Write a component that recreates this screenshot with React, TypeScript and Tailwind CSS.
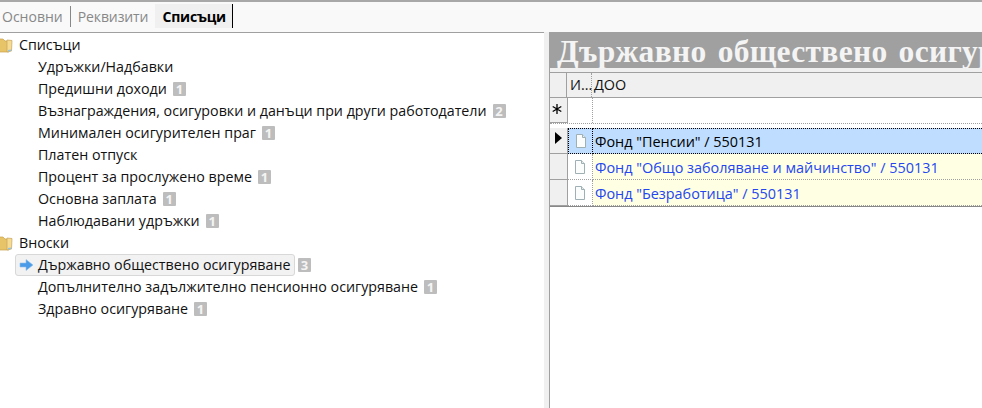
const FONT = "font-['Open_Sans','Noto_Sans',sans-serif]";

function Folder() {
  return (
    <svg width="13" height="16" viewBox="0 0 13 16" className="shrink-0">
      <path d="M-4 2 H3 L5 4 H9 V15 H-4 Z" fill="#e8c468" stroke="#c9a24a" strokeWidth="0.7" />
      <path d="M7 3 L12 3.5 L11.5 14 L7 15 Z" fill="#f6dc92" stroke="#c6a45a" strokeWidth="0.7" />
      <path d="M8 13 L11 12.5 L11 14 L8 14.5 Z" fill="#8fc4e8" />
    </svg>
  );
}

function Badge({ n, tight }: { n: number; tight?: boolean }) {
  return (
    <span className={`${tight ? "ml-[3px]" : "ml-[6px]"} flex h-[14px] w-[13px] items-center justify-center rounded-[1px] bg-[#bdbdbd] text-[13px] font-bold leading-none text-[#f4f4f4]`}>
      {n}
    </span>
  );
}

function Item({ label, badge }: { label: string; badge?: number }) {
  return (
    <div className="flex h-[22px] items-center pl-[38px]">
      <span className="whitespace-nowrap">{label}</span>
      {badge !== undefined && <Badge n={badge} />}
    </div>
  );
}

function Group({ label }: { label: string }) {
  return (
    <div className="flex h-[22px] items-center">
      <Folder />
      <span className="ml-[6px]">{label}</span>
    </div>
  );
}

function DocIcon() {
  return (
    <svg width="12" height="14" viewBox="0 0 12 14">
      <path d="M1.5 .5 H7.5 L10.5 3.5 V13.5 H1.5 Z" fill="#fbfcfc" stroke="#9fb0b4" />
      <path d="M7.5 .5 V3.5 H10.5" fill="#e4ecee" stroke="#9fb0b4" />
    </svg>
  );
}

function Row({ text, selected }: { text: string; selected?: boolean }) {
  return (
    <div className="flex h-[26px]">
      <div className="flex w-[18px] shrink-0 items-center justify-center border-r border-b border-[#a0a0a0] bg-[#f0f0f0]">
        {selected && <div className="mb-[5px] h-0 w-0 border-y-[6px] border-l-[7px] border-y-transparent border-l-black" />}
      </div>
      <div className={`flex w-[25px] shrink-0 items-center justify-center ${selected ? "border border-dotted border-black bg-[#bfdeff]" : "border-r border-b border-dotted border-[#a0a0a0] bg-white"}`}>
        <DocIcon />
      </div>
      <div className={`flex min-w-0 flex-1 items-center whitespace-nowrap pl-[2px] pt-[2px] ${selected ? "border-y border-dotted border-black bg-[#bfdeff] text-black" : "border-b border-dotted border-[#a0a0a0] bg-[#ffffe4] text-[#2346f0]"}`}>
        {text}
      </div>
    </div>
  );
}

export default function App() {
  return (
    <div className={`flex h-[408px] w-[982px] flex-col overflow-hidden bg-[#f0f0f0] text-[14.25px] text-[#111] ${FONT}`}>
      <div className="flex h-[32px] shrink-0 items-end border-t-2 border-t-[#a8a8a8] bg-[#f9f9f9] pb-[4px] text-[14px]">
        <div className="flex h-[24px] items-center text-[#888]">
          <span className="pl-[2px] pr-[7px]">Основни</span>
          <span className="h-[21px] w-px bg-[#888]" />
          <span className="pl-[7px] pr-[7px] tracking-[-0.1px]">Реквизити</span>
        </div>
        <div className="flex h-[24px] items-center border-r border-black bg-[#f0f0f0] pl-[7px] pr-[6px] font-bold tracking-[-0.2px] text-black">
          Списъци
        </div>
      </div>
      <div className="flex min-h-0 flex-1">
        <div className="w-[544px] shrink-0 border-t border-[#a0a0a0] bg-white pt-[1px]">
          <Group label="Списъци" />
          <Item label="Удръжки/Надбавки" />
          <Item label="Предишни доходи" badge={1} />
          <Item label="Възнаграждения, осигуровки и данъци при други работодатели" badge={2} />
          <Item label="Минимален осигурителен праг" badge={1} />
          <Item label="Платен отпуск" />
          <Item label="Процент за прослужено време" badge={1} />
          <Item label="Основна заплата" badge={1} />
          <Item label="Наблюдавани удръжки" badge={1} />
          <Group label="Вноски" />
          <div className="flex h-[22px] items-center pl-[15px]">
            <div className="flex h-[22px] w-[280px] items-center rounded-[3px] border border-[#d8d8d8] bg-[#f2f2f2] pl-[3px]">
              <svg width="15" height="12" viewBox="0 0 15 12" className="shrink-0">
                <path d="M1 4 H7 V.5 L14 6 L7 11.5 V8 H1 Z" fill="#4a9ce8" stroke="#8fbfe8" strokeWidth="0.6" />
              </svg>
              <span className="ml-[4px] whitespace-nowrap">Държавно обществено осигуряване</span>
            </div>
            <Badge n={3} tight />
          </div>
          <Item label="Допълнително задължително пенсионно осигуряване" badge={1} />
          <Item label="Здравно осигуряване" badge={1} />
        </div>
        <div className="w-[5px] shrink-0 bg-[#f0f0f0]" />
        <div className="min-w-0 flex-1 overflow-hidden bg-white">
          <div className="flex h-[36px] items-center overflow-hidden whitespace-nowrap bg-[#a0a0a0] pl-[8px] pt-[3px] font-['Liberation_Serif',serif] text-[31.5px] font-bold leading-none tracking-[0.3px] [word-spacing:3px] text-[#f4f4f4]">
            Държавно обществено осигуряване
          </div>
          <div className="h-full border-l border-[#a0a0a0] text-[14.4px]">
            <div className="h-[4px] bg-[#f0f0f0]" />
            <div className="flex h-[26px] border-y border-[#a0a0a0] bg-[#f0f0f0]">
              <div className="w-[17px] shrink-0 border-r border-[#a0a0a0]" />
              <div className="flex w-[25px] shrink-0 items-center border-r border-dotted border-[#a0a0a0] pl-[3px]">И...</div>
              <div className="flex items-center pl-[2px]">ДОО</div>
            </div>
            <div className="flex h-[26px] border-b border-dotted border-[#a0a0a0]">
              <div className="flex w-[18px] shrink-0 items-center justify-center border-r border-b border-[#a0a0a0] bg-[#f0f0f0] pb-[3px] pr-[3px]">
                <svg width="10" height="10" viewBox="0 0 10 10">
                  <path d="M5 0 V10 M.7 2.5 L9.3 7.5 M.7 7.5 L9.3 2.5" stroke="#000" strokeWidth="1.3" />
                </svg>
              </div>
              <div className="w-[25px] shrink-0 border-r border-dotted border-[#a0a0a0]" />
            </div>
            <div className="h-[4px]" />
            <div className="border-b border-[#888]">
              <Row text={'Фонд "Пенсии" / 550131'} selected />
              <Row text={'Фонд "Общо заболяване и майчинство" / 550131'} />
              <Row text={'Фонд "Безработица" / 550131'} />
            </div>
          </div>
        </div>
      </div>
    </div>
  );
}
